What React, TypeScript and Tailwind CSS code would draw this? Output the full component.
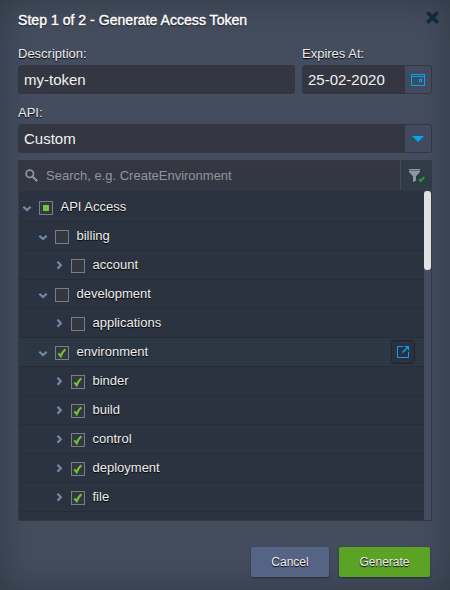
import React from "react";

type State = "partial" | "off" | "on";
type Row = { label: string; depth: number; open: boolean; state: State; active?: boolean };

const rows: Row[] = [
  { label: "API Access", depth: 0, open: true, state: "partial" },
  { label: "billing", depth: 1, open: true, state: "off" },
  { label: "account", depth: 2, open: false, state: "off" },
  { label: "development", depth: 1, open: true, state: "off" },
  { label: "applications", depth: 2, open: false, state: "off" },
  { label: "environment", depth: 1, open: true, state: "on", active: true },
  { label: "binder", depth: 2, open: false, state: "on" },
  { label: "build", depth: 2, open: false, state: "on" },
  { label: "control", depth: 2, open: false, state: "on" },
  { label: "deployment", depth: 2, open: false, state: "on" },
  { label: "file", depth: 2, open: false, state: "on" },
];

const indents = ["pl-[3px]", "pl-[19px]", "pl-[35px]"];
const shadow = "[text-shadow:0_1px_1px_#000]";

function Chevron({ open }: { open: boolean }) {
  return (
    <svg width="10" height="10" viewBox="0 0 10 10" fill="none" stroke="#7189aa" strokeWidth="2.2" className="mt-0.5 shrink-0">
      {open ? <path d="M1.3 3.7 5 7l3.7-3.3" /> : <path d="M3.5 .7 6.8 4.2 3.5 7.7" />}
    </svg>
  );
}

function Check({ state }: { state: State }) {
  return (
    <span className="mt-0.5 ml-[7px] flex h-[14px] w-[14px] shrink-0 items-center justify-center border border-[#777d8c] bg-[#35373e]">
      {state === "partial" && <span className="h-[6px] w-[6px] bg-[#76c043]" />}
      {state === "on" && (
        <svg width="12" height="12" viewBox="0 0 12 12" fill="none" stroke="#76c043" strokeWidth="2.1">
          <path d="M2.4 6.3 4.7 9.2Q6.2 5.2 9.3 2.3" />
        </svg>
      )}
    </span>
  );
}

function TreeRow({ row }: { row: Row }) {
  return (
    <div className={`flex h-[29px] shrink-0 items-center border-b border-[#272d38] ${indents[row.depth]} ${row.active ? "bg-[#2c3744]" : ""}`}>
      <Chevron open={row.open} />
      <Check state={row.state} />
      <span className={`ml-[7.5px] text-[13px] leading-4 text-[#eeeeee] ${shadow}`}>{row.label}</span>
      {row.active && (
        <span className="mr-[9px] ml-auto flex h-6 w-6 items-center justify-center rounded-[4px] border border-[#20232f] bg-[#2c3040]">
          <svg width="12" height="12" viewBox="0 0 12 12" fill="none" stroke="#00a5f7" strokeWidth="1">
            <path d="M6 .5H.5v11h11V6M7.5 .5h4v4" />
            <path d="M5.5 6.5l5-5" strokeWidth="1.4" />
            <path d="M9 .5h2.5v2.5z" fill="#00a5f7" />
          </svg>
        </span>
      )}
    </div>
  );
}

export default function App() {
  return (
    <main className="flex h-[590px] w-[450px] flex-col overflow-hidden bg-[#444d5e] px-[18px] font-['Liberation_Sans',Arial,sans-serif] shadow-[inset_0_0_35px_#2f3944]">
      <header className="flex h-[45px] justify-between pt-[11px]">
        <h1 className="text-[14px] leading-[18px] tracking-[0.04px] text-white [-webkit-text-stroke:0.4px_white] [text-shadow:0_1px_1px_#000]">Step 1 of 2 - Generate Access Token</h1>
        <svg width="13" height="13" viewBox="0 0 13 13" stroke="#102a42" strokeWidth="3.6" className="-mr-[7px]">
          <path d="m1.3 1.3 10.4 10.4M11.7 1.3 1.3 11.7" />
        </svg>
      </header>

      <div className="flex gap-[7px]">
        <div className="w-[277px]">
          <label className={`block h-5 text-[13px] leading-[17px] text-[#eeeeee] ${shadow}`}>Description:</label>
          <div className="flex h-[29px] items-center rounded-[3px] bg-[#343741] px-[6px] pt-[2px] text-[15px] text-[#f2f2f2]">my-token</div>
        </div>
        <div className="w-[130px]">
          <label className={`block h-5 text-[13px] leading-[17px] text-[#eeeeee] ${shadow}`}>Expires At:</label>
          <div className="flex h-[29px] items-center justify-between rounded-[3px] border border-[#343741] bg-[#343741] pl-[5px] text-[15px] text-[#f2f2f2]">
            <span className="pt-[2px]">25-02-2020</span>
            <span className="flex h-full w-[26px] items-center justify-center rounded-r-[2px] bg-[#424b5d]">
              <svg width="14" height="12" viewBox="0 0 14 12" fill="none" stroke="#00a5f7" shapeRendering="crispEdges">
                <path d="M.5 .5h13v11H.5zM.5 2.5h13M8.5 5.5h2v2h-2z" />
              </svg>
            </span>
          </div>
        </div>
      </div>

      <label className={`mt-[10px] block h-5 shrink-0 text-[13px] leading-[17px] text-[#eeeeee] ${shadow}`}>API:</label>
      <div className="flex h-[29px] shrink-0 items-center justify-between rounded-[3px] border border-[#343741] bg-[#343741] pl-[5px] text-[15px] text-[#f2f2f2]">
        <span className="pt-[2px]">Custom</span>
        <span className="flex h-full w-[26px] items-center justify-center rounded-r-[2px] bg-[#424b5d]">
          <svg width="12" height="6" viewBox="0 0 12 6" fill="#00a5f7"><path d="M0 0h12L6 6z" /></svg>
        </span>
      </div>

      <section className="mt-[7px] flex h-[361px] shrink-0 flex-col border border-[#343943] bg-[#2c3340]">
        <div className="flex h-[30px] shrink-0 items-center border-b border-[#303a46] bg-[#343741]">
          <svg width="13" height="13" viewBox="0 0 13 13" fill="none" stroke="#8b929a" className="-mt-px ml-[6px]">
            <circle cx="4.8" cy="4.8" r="3.7" strokeWidth="1.8" />
            <path d="m7.5 7.5 4.7 4.7" strokeWidth="2.2" />
          </svg>
          <span className="ml-2 text-[13px] text-[#8f959d]">Search, e.g. CreateEnvironment</span>
          <span className="ml-auto flex h-full w-[31px] items-center border-l border-[#424c5c] bg-[#303b48] pl-[8px]">
            <svg width="17" height="14" viewBox="0 0 17 14" fill="none">
              <path d="M0 0h11v1.2H0zM0 1.8h11v1.2L7 7.3v4.4L4 13V7.3L0 3z" fill="#8d97a0" />
              <path d="m10 10.3 1.7 1.6 3.6-3.7" stroke="#21a938" strokeWidth="1.8" />
            </svg>
          </span>
        </div>
        <div className="flex min-h-0 flex-1">
          <div className="flex min-w-0 flex-1 flex-col overflow-hidden pt-0.5">
            {rows.map((row) => <TreeRow key={row.label} row={row} />)}
          </div>
          <div className="w-[7px] bg-[#454e61]"><div className="h-[79px] w-[7px] rounded-[3px] bg-[#e1e1e1]" /></div>
        </div>
      </section>

      <footer className="mt-[26px] flex justify-end gap-[10px] pr-[2px]">
        <button className={`h-[30px] w-[78px] rounded-[2px] bg-[#556385] text-[12px] text-[#eeeeee] shadow-[0_1px_2px_#272e38] ${shadow}`}>Cancel</button>
        <button className={`h-[30px] w-[91px] rounded-[2px] bg-[#5ba325] text-[12px] text-[#eeeeee] shadow-[0_1px_2px_#272e38] ${shadow}`}>Generate</button>
      </footer>
    </main>
  );
}
